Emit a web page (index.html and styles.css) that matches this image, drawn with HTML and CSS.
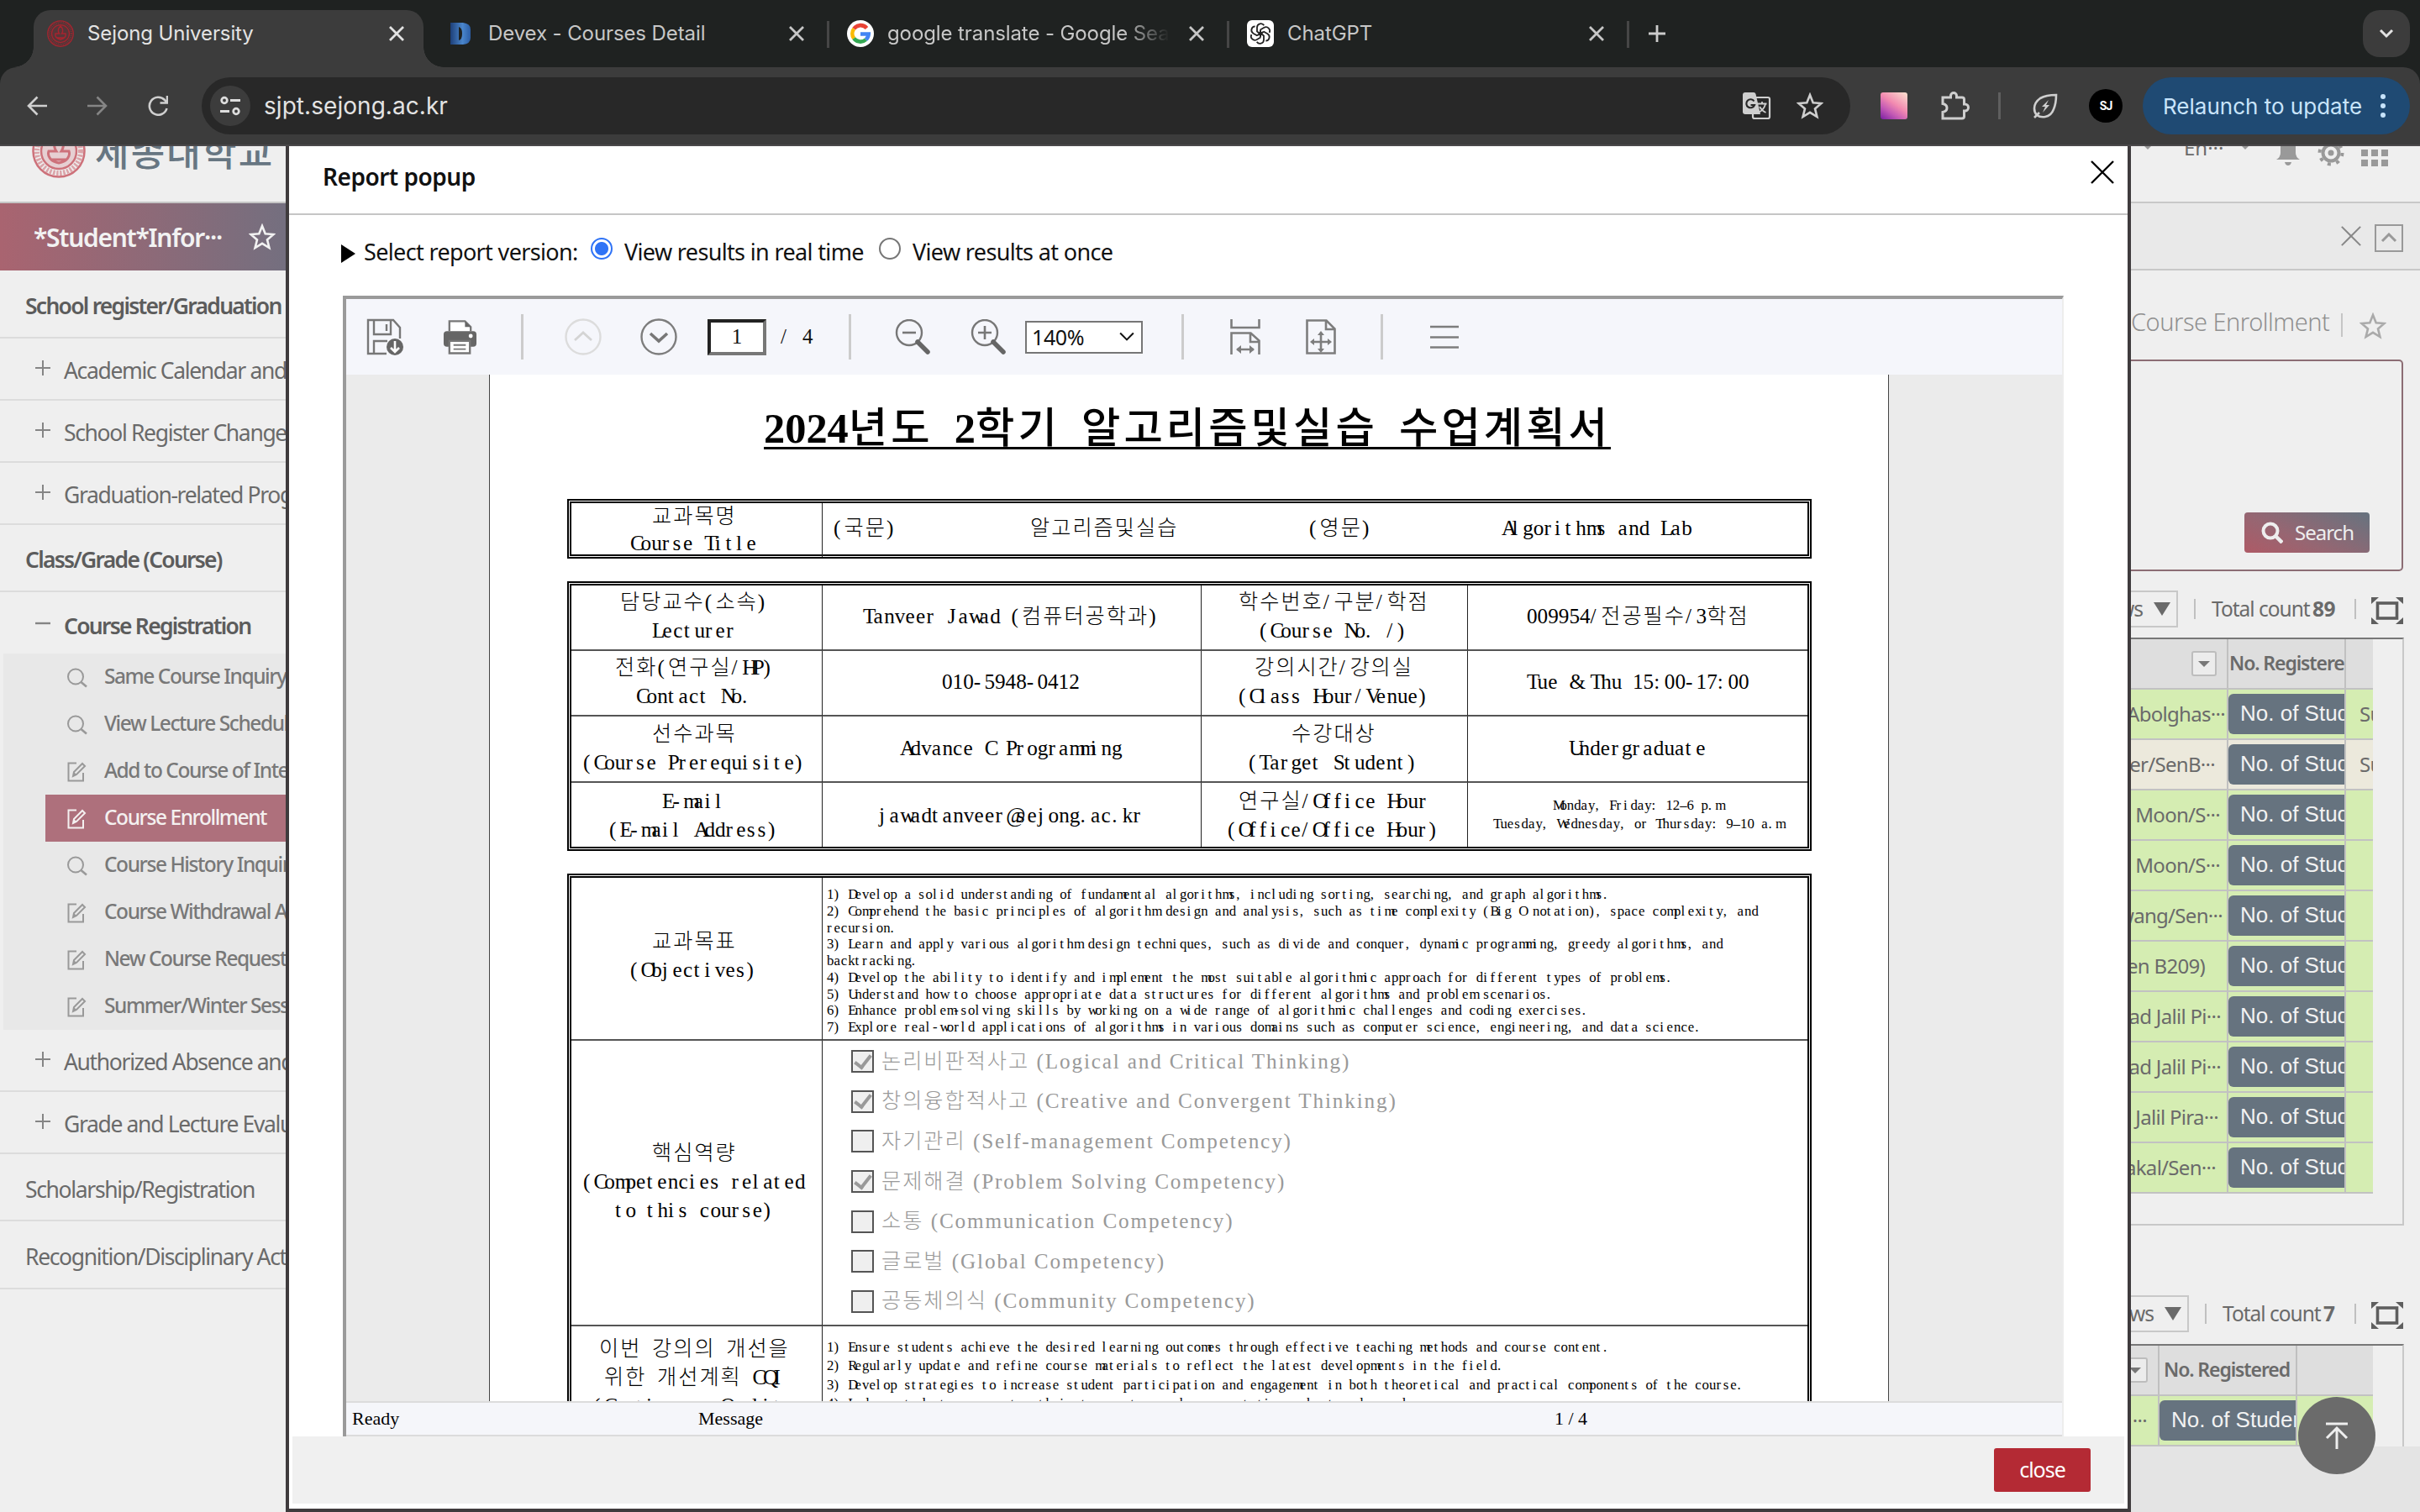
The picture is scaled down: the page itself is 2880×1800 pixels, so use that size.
FILE: index.html
```html
<!DOCTYPE html>
<html lang="ko">
<head>
<meta charset="utf-8">
<title>Sejong University</title>
<link rel="stylesheet" href="styles.css">
</head>
<body>
<svg class="defs" aria-hidden="true">
  <symbol id="x" viewBox="0 0 20 20"><path d="M2 2 18 18M18 2 2 18" fill="none" stroke="currentColor" stroke-width="2.8"/></symbol>
  <symbol id="thin-x" viewBox="0 0 28 28"><path d="M1 1 27 27M27 1 1 27" fill="none" stroke="currentColor" stroke-width="2.4"/></symbol>
  <symbol id="star" viewBox="0 0 32 32"><path d="M16 3l3.7 9.2 9.8.8-7.5 6.4 2.4 9.6-8.4-5.2-8.4 5.2L10 19.4 2.500 13l9.800-.8z" fill="none" stroke="currentColor" stroke-width="2.600"/></symbol>
  <symbol id="plus" viewBox="0 0 18 18"><path d="M9 0v18M0 9h18" stroke="currentColor" stroke-width="2"/></symbol>
  <symbol id="minus" viewBox="0 0 18 18"><path d="M0 9h18" stroke="currentColor" stroke-width="2.400"/></symbol>
  <symbol id="lens" viewBox="0 0 24 24"><circle cx="10" cy="10.500" r="9" fill="none" stroke="currentColor" stroke-width="2"/><path d="M16.500 17l6.500 5.500" stroke="currentColor" stroke-width="2.600"/></symbol>
  <symbol id="edit" viewBox="0 0 24 24"><path d="M11 1.500H1.500v21H19V13" fill="none" stroke="currentColor" stroke-width="2"/><path d="M7 17l1-5L18 2l3 3-10 10z" fill="none" stroke="currentColor" stroke-width="2"/><path d="M7 17l1-5 3.500 3.500z" fill="currentColor"/></symbol>
  <symbol id="expand" viewBox="0 0 38 36"><path d="M0 10V2h9zM38 10V2h-9zM0 26v8h9zM38 26v8h-9z" fill="currentColor"/><rect x="7.500" y="9" width="23" height="18" fill="none" stroke="currentColor" stroke-width="3.600"/></symbol>
  <symbol id="emblem" viewBox="0 0 64 64"><circle cx="32" cy="32" r="30.500" fill="none" stroke="currentColor" stroke-width="2.500"/><circle cx="32" cy="32" r="26" fill="none" stroke="currentColor" stroke-width="6" stroke-dasharray="2.500 1.600" opacity=".6"/><circle cx="32" cy="32" r="21" fill="currentColor" fill-opacity=".25" stroke="currentColor" stroke-width="2.500"/><path d="M32 14c6 6 7 12 3 18h9c2 6-2 12-12 14-10-2-14-8-12-14h9c-4-6-3-12 3-18zM24 42h16" fill="none" stroke="currentColor" stroke-width="3"/></symbol>
</svg>

<header class="chrome">
  <div class="tabs">
    <div class="tab active">
      <svg class="fav red"><use href="#emblem"/></svg><span class="ttl">Sejong University</span><svg class="tx"><use href="#x"/></svg>
    </div>
    <div class="tab devex">
      <svg class="fav" viewBox="0 0 32 32"><defs><linearGradient id="dg"><stop offset="0" stop-color="#1d3f78"/><stop offset=".6" stop-color="#4a86cc"/><stop offset="1" stop-color="#2b5da5"/></linearGradient></defs><path d="M4 3h15q9 1 9 8v10q0 7-9 8H4zM14 8v16q4-1 4-8t-4-8z" fill="url(#dg)" fill-rule="evenodd"/></svg><span class="ttl">Devex - Courses Detail</span><svg class="tx"><use href="#x"/></svg>
    </div>
    <div class="tab sep">
      <svg class="fav" viewBox="0 0 32 32"><circle cx="16" cy="16" r="16" fill="#fff"/><g fill="none" stroke-width="4.600"><path d="M23.500 9.500A9.700 9.700 0 0 0 8.200 10.300" stroke="#e94335"/><path d="M8.200 10.300a9.700 9.700 0 0 0 0 11.400" stroke="#fabb05"/><path d="M8.200 21.700a9.700 9.700 0 0 0 14.300 1.400" stroke="#34a853"/><path d="M22.500 23.100A9.700 9.700 0 0 0 25.700 16.500H16" stroke="#4285f4"/></g></svg><span class="ttl fade">google translate - Google Search</span><svg class="tx"><use href="#x"/></svg>
    </div>
    <div class="tab sep">
      <svg class="fav" viewBox="0 0 32 32"><rect width="32" height="32" rx="6" fill="#fff"/><g fill="none" stroke="#222" stroke-width="1.800"><g id="k"><path d="M12 14V8.500a4.500 4.500 0 0 1 8.300-2.300M12 13.700l7 4"/></g><use href="#k" transform="rotate(60 16 16)"/><use href="#k" transform="rotate(120 16 16)"/><use href="#k" transform="rotate(180 16 16)"/><use href="#k" transform="rotate(240 16 16)"/><use href="#k" transform="rotate(300 16 16)"/></g></svg><span class="ttl">ChatGPT</span><svg class="tx"><use href="#x"/></svg>
    </div>
    <div class="newtab"><svg viewBox="0 0 20 20"><path d="M10 0v20M0 10h20" stroke="#ccc" stroke-width="2.800"/></svg></div>
    <div class="tabsearch"><svg viewBox="0 0 18 12"><path d="M2 2l7 7 7-7" fill="none" stroke="#e3e3e3" stroke-width="3"/></svg></div>
  </div>
  <div class="toolbar">
    <svg class="nav" viewBox="0 0 24 24"><path d="M24 12H2M12.500 1.500 2 12l10.500 10.500" fill="none" stroke="#cfcfcf" stroke-width="2.600"/></svg>
    <svg class="nav" viewBox="0 0 24 24"><path d="M0 12h22M11.500 1.500 22 12 11.500 22.500" fill="none" stroke="#858585" stroke-width="2.600"/></svg>
    <svg class="nav" viewBox="0 0 24 24"><path d="M22.500 15A10.500 10.500 0 1 1 20 5l2 2.500M23 0v8.500h-8.500" fill="none" stroke="#cfcfcf" stroke-width="2.600"/></svg>
    <div class="omni">
      <span class="site"><svg viewBox="0 0 24 24"><g fill="none" stroke="#ddd" stroke-width="2.800"><circle cx="5" cy="5.500" r="3.300"/><path d="M12 5.500h12M0 18.500h11"/><circle cx="19" cy="18.500" r="3.300"/></g></svg></span>
      <span class="url">sjpt.sejong.ac.kr</span>
      <svg class="oi" viewBox="0 0 34 34"><rect x="12" y="7" width="20" height="25" rx="2" fill="none" stroke="#cfcfcf" stroke-width="2.200"/><path d="M3 1h10q2 0 2.500 2L21 27H3q-3 0-3-3V4q0-3 3-3z" fill="#cfcfcf"/><path d="M13.500 11.500A5 5 0 1 0 14 16h-4.500" fill="none" stroke="#282828" stroke-width="2.200"/><path d="M17.500 14.500h11M23 12v2.500M27 15q-2 7-8.500 10M20 18q3 5 7.500 7" fill="none" stroke="#cfcfcf" stroke-width="1.800"/></svg>
      <svg class="oi star"><use href="#star"/></svg>
    </div>
    <span class="ext"></span>
    <svg class="puzzle" viewBox="0 0 36 36"><path d="M4 8h9.500V6a3.500 3.500 0 0 1 7 0v2H27q2.500 0 2.500 2.500V16h1a4 4 0 0 1 0 8h-1v6.500Q29.500 33 27 33H4v-7.500q5-1 5-5t-5-5z" fill="none" stroke="#cfcfcf" stroke-width="3"/></svg>
    <span class="vbar"></span>
    <svg class="leaf" viewBox="0 0 32 32"><path d="M29 3q-12 0-19 4-7 5-7 12 0 5 3 8 4 3 10 2 7-1 10-9 3-7 3-17zM3 30l6-6" fill="none" stroke="#cfcfcf" stroke-width="2.600"/><path d="M20 9l-8 8h4l-3 7 8-9h-4z" fill="#cfcfcf"/></svg>
    <span class="avatar">SJ</span>
    <span class="relaunch">Relaunch to update<i></i></span>
  </div>
</header>

<main class="page">
  <nav class="side">
    <div class="logo"><svg><use href="#emblem"/></svg><b>세종대학교</b></div>
    <div class="who"><span>*Student*Infor···</span><svg><use href="#star"/></svg></div>
    <div class="sec b h81">School register/Graduation</div>
    <div class="it"><svg><use href="#plus"/></svg>Academic Calendar and</div>
    <div class="it"><svg><use href="#plus"/></svg>School Register Change</div>
    <div class="it"><svg><use href="#plus"/></svg>Graduation-related Program</div>
    <div class="sec b">Class/Grade (Course)</div>
    <div class="it b open"><svg><use href="#minus"/></svg>Course Registration</div>
    <div class="subs">
      <div class="sub"><svg><use href="#lens"/></svg>Same Course Inquiry</div>
      <div class="sub"><svg><use href="#lens"/></svg>View Lecture Schedule</div>
      <div class="sub"><svg><use href="#edit"/></svg>Add to Course of Interest</div>
      <div class="sub on"><svg><use href="#edit"/></svg>Course Enrollment</div>
      <div class="sub"><svg><use href="#lens"/></svg>Course History Inquiry</div>
      <div class="sub"><svg><use href="#edit"/></svg>Course Withdrawal App</div>
      <div class="sub"><svg><use href="#edit"/></svg>New Course Request</div>
      <div class="sub"><svg><use href="#edit"/></svg>Summer/Winter Session</div>
    </div>
    <div class="it"><svg><use href="#plus"/></svg>Authorized Absence and</div>
    <div class="it"><svg><use href="#plus"/></svg>Grade and Lecture Evaluation</div>
    <div class="sec low">Scholarship/Registration</div>
    <div class="sec h81 low">Recognition/Disciplinary Action</div>
  </nav>

  <section class="modal">
    <div class="mhead"><h1>Report popup</h1><svg><use href="#thin-x"/></svg></div>
    <div class="opts">
      <i class="tri"></i><span class="o1">Select report version:</span>
      <i class="radio on"></i><span class="o2">View results in real time</span>
      <i class="radio"></i><span>View results at once</span>
    </div>
    <div class="viewer">
      <div class="vbarx">
        <svg class="save" viewBox="0 0 44 44"><g fill="none" stroke="#777" stroke-width="2.400"><path d="M24 42H2V2h30l8 9v13M9 2v17h20V2M24 7v8M9 42V27h16"/></g><circle cx="34" cy="34" r="10" fill="#666"/><path d="M34 27v12M29 35l5 5 5-5" stroke="#fff" stroke-width="2.600" fill="none"/></svg>
        <svg class="print" viewBox="0 0 42 42"><path d="M8 14V2h19l7 7v5" fill="#fff" stroke="#777" stroke-width="2.400"/><path d="M27 2v7h7z" fill="#666"/><rect x="1" y="14" width="40" height="19" rx="4" fill="#666"/><circle cx="34" cy="20" r="2.500" fill="#fff"/><path d="M8 26h25v15H8z" fill="#fff" stroke="#777" stroke-width="2.400"/><path d="M13 31h15M13 36h15" stroke="#777" stroke-width="2"/></svg>
        <i class="bar"></i>
        <svg class="circ up" viewBox="0 0 44 44"><circle cx="22" cy="22" r="20.500" fill="none" stroke="#dcdcdc" stroke-width="2.400"/><path d="M12 26l10-9 10 9" fill="none" stroke="#d4d4d4" stroke-width="2.800"/></svg>
        <svg class="circ dn" viewBox="0 0 44 44"><circle cx="22" cy="22" r="20.500" fill="none" stroke="#7d7d7d" stroke-width="2.400"/><path d="M12 18l10 9 10-9" fill="none" stroke="#777" stroke-width="3.600"/></svg>
        <span class="pg">1</span><span class="of"><span>/</span><span>4</span></span>
        <i class="bar"></i>
        <svg class="zo" viewBox="0 0 42 42"><g fill="none" stroke="#777"><circle cx="17" cy="16" r="15" stroke-width="2.400"/><path d="M9 16h16" stroke-width="2.600"/></g><path d="M27 27l12 12" stroke="#666" stroke-width="5.500" stroke-linecap="round"/></svg>
        <svg class="zi" viewBox="0 0 42 42"><g fill="none" stroke="#777"><circle cx="17" cy="16" r="15" stroke-width="2.400"/><path d="M9 16h16M17 8v16" stroke-width="2.600"/></g><path d="M27 27l12 12" stroke="#666" stroke-width="5.500" stroke-linecap="round"/></svg>
        <span class="zsel">140%<svg viewBox="0 0 16 10"><path d="M1 1l7 7 7-7" fill="none" stroke="#111" stroke-width="1.800"/></svg></span>
        <i class="bar"></i>
        <svg class="fw" viewBox="0 0 36 42"><g fill="none" stroke="#7d7d7d" stroke-width="2.600"><path d="M1.500 0v10h33V0M1.500 42V16.500h23l10 9V42M24 16.500V27h10M8 36h20"/></g><path d="M7 36l6-5v10zM29 36l-6-5v10z" fill="#7d7d7d"/></svg>
        <svg class="fp" viewBox="0 0 36 42"><g fill="none" stroke="#7d7d7d" stroke-width="2.600"><path d="M1.500 1.500h23l10 10v29h-33zM24 1.500V12h10M18 18v18M9 27h18"/></g><path d="M18 14l-4 5h8zM18 40l-4-5h8zM5 27l5-4v8zM31 27l-5-4v8z" fill="#7d7d7d"/></svg>
        <i class="bar"></i>
        <svg class="mn" viewBox="0 0 34 28"><path d="M0 2h34M0 14.500h34M0 26.500h34" stroke="#7d7d7d" stroke-width="2.600"/></svg>
      </div>
      <div class="canvas">
        <article class="paper">
          <h2><p class="ln t50">2024년도 2학기 알고리즘및실습 수업계획서</p></h2>
          <div class="tbl t1">
            <div class="lab"><p class="ln">교과목명</p><p class="ln">Course Title</p></div>
            <div class="r1"><p class="ln">(국문)</p></div><div class="r2"><p class="ln">알고리즘및실습</p></div><div class="r3"><p class="ln">(영문)</p></div><div class="r4"><p class="ln">Algorithms and Lab</p></div>
          </div>
          <div class="tbl t2">
            <div class="lab"><p class="ln">담당교수(소속)</p><p class="ln">Lecturer</p></div><div><p class="ln">Tanveer Jawad (컴퓨터공학과)</p></div><div><p class="ln">학수번호/구분/학점</p><p class="ln">(Course No. /)</p></div><div><p class="ln">009954/전공필수/3학점</p></div>
            <div class="lab"><p class="ln">전화(연구실/HP)</p><p class="ln">Contact No.</p></div><div><p class="ln">010-5948-0412</p></div><div><p class="ln">강의시간/강의실</p><p class="ln">(Class Hour/Venue)</p></div><div><p class="ln">Tue &amp; Thu 15:00-17:00</p></div>
            <div class="lab"><p class="ln">선수과목</p><p class="ln">(Course Prerequisite)</p></div><div><p class="ln">Advance C Programming</p></div><div><p class="ln">수강대상</p><p class="ln">(Target Student)</p></div><div><p class="ln">Undergraduate</p></div>
            <div class="lab em"><p class="ln">E-mail</p><p class="ln">(E-mail Address)</p></div><div class="em"><p class="ln">jawadtanveer@sejong.ac.kr</p></div><div class="em"><p class="ln">연구실/Office Hour</p><p class="ln">(Office/Office Hour)</p></div><div class="sm"><p class="ln">Monday, Friday: 12–6 p.m</p><p class="ln">Tuesday, Wednesday, or Thursday: 9–10 a.m</p></div>
          </div>
          <div class="tbl t3">
            <div class="lab ob"><p class="ln">교과목표</p><p class="ln">(Objectives)</p></div>
            <div class="list obj">
              <p class="ln">1) Develop a solid understanding of fundamental algorithms, including sorting, searching, and graph algorithms.</p>
              <p class="ln">2) Comprehend the basic principles of algorithm design and analysis, such as time complexity (Big O notation), space complexity, and</p>
              <p class="ln">recursion.</p>
              <p class="ln">3) Learn and apply various algorithm design techniques, such as divide and conquer, dynamic programming, greedy algorithms, and</p>
              <p class="ln">backtracking.</p>
              <p class="ln">4) Develop the ability to identify and implement the most suitable algorithmic approach for different types of problems.</p>
              <p class="ln">5) Understand how to choose appropriate data structures for different algorithms and problem scenarios.</p>
              <p class="ln">6) Enhance problem-solving skills by working on a wide range of algorithmic challenges and coding exercises.</p>
              <p class="ln">7) Explore real-world applications of algorithms in various domains such as computer science, engineering, and data science.</p>
            </div>
            <div class="lab"><p class="ln">핵심역량</p><p class="ln">(Competencies related</p><p class="ln">to this course)</p></div>
            <div class="checks">
              <p><i class="cb c"></i>논리비판적사고 <span>(Logical and Critical Thinking)</span></p>
              <p><i class="cb c"></i>창의융합적사고 <span>(Creative and Convergent Thinking)</span></p>
              <p><i class="cb"></i>자기관리 <span>(Self-management Competency)</span></p>
              <p><i class="cb c"></i>문제해결 <span>(Problem Solving Competency)</span></p>
              <p><i class="cb"></i>소통 <span>(Communication Competency)</span></p>
              <p><i class="cb"></i>글로벌 <span>(Global Competency)</span></p>
              <p><i class="cb"></i>공동체의식 <span>(Community Competency)</span></p>
            </div>
            <div class="lab cqi"><p class="ln">이번 강의의 개선을</p><p class="ln">위한 개선계획 CQI</p><p class="ln">(Continuous Quality</p></div>
            <div class="list imp">
              <p class="ln">1) Ensure students achieve the desired learning outcomes through effective teaching methods and course content.</p>
              <p class="ln">2) Regularly update and refine course materials to reflect the latest developments in the field.</p>
              <p class="ln">3) Develop strategies to increase student participation and engagement in both theoretical and practical components of the course.</p>
              <p class="ln">4) Induce students can master their team-outcomes by presentations about modern advances.</p>
            </div>
          </div>
        </article>
      </div>
      <div class="status"><span class="s1">Ready</span><span class="s2">Message</span><span>1 / 4</span></div>
    </div>
    <footer class="mfoot"><span class="btn">close</span></footer>
  </section>

  <section class="right">
    <div class="rtop">
      <i class="dn1"></i><span>En···</span><i class="dn2"></i>
      <svg class="bell" viewBox="0 0 30 40"><path d="M15 0q9 2 9 14v10q0 5 5 8H1q5-3 5-8V14Q6 2 15 0zM11 35h8q-1 4-4 4t-4-4z" fill="#999"/></svg>
      <svg class="gear" viewBox="0 0 32 32"><circle cx="16" cy="16" r="9.500" fill="none" stroke="#999" stroke-width="4"/><circle cx="16" cy="16" r="3.500" fill="#999"/><circle cx="16" cy="16" r="13.500" fill="none" stroke="#999" stroke-width="4" stroke-dasharray="4 6.600"/></svg>
      <svg class="apps" viewBox="0 0 32 34"><path d="M0 1h8v8H0zM12 1h8v8h-8zM24 1h8v8h-8zM0 13h8v8H0zM12 13h8v8h-8zM24 13h8v8h-8zM0 25h8v8H0zM12 25h8v8h-8zM24 25h8v8h-8z" fill="#999"/></svg>
    </div>
    <div class="rtab"><svg class="rx"><use href="#thin-x"/></svg><span class="upb"><svg viewBox="0 0 20 12"><path d="M2 10l8-8 8 8" fill="none" stroke="#999" stroke-width="3"/></svg></span></div>
    <div class="rhead"><span>Course Enrollment</span><i></i><svg><use href="#star"/></svg></div>
    <div class="panel"><span class="search"><svg viewBox="0 0 26 26"><circle cx="11" cy="11" r="8.500" fill="none" stroke="#eee" stroke-width="4"/><path d="M17 17l8 8" stroke="#eee" stroke-width="4.500"/></svg>Search</span></div>
    <div class="count c1"><span class="sel">ws<i></i></span><i class="b"></i><span class="tc">Total count <b>89</b></span><i class="b2"></i><svg><use href="#expand"/></svg></div>
    <div class="grid g1">
      <div class="row hd"><span class="n"><em class="flt"></em></span><span class="s">No. Registered</span><span class="u"></span></div>
      <div class="row"><span class="n" style="padding-right:2px">Abolghas···</span><span class="s"><b>No. of Students</b></span><span class="u">Su</span></div>
      <div class="row alt"><span class="n" style="padding-right:14px">er/SenB···</span><span class="s"><b>No. of Students</b></span><span class="u">Su</span></div>
      <div class="row"><span class="n" style="padding-right:8px">Moon/S···</span><span class="s"><b>No. of Students</b></span><span class="u"></span></div>
      <div class="row"><span class="n" style="padding-right:8px">Moon/S···</span><span class="s"><b>No. of Students</b></span><span class="u"></span></div>
      <div class="row"><span class="n" style="padding-right:5px">wang/Sen···</span><span class="s"><b>No. of Students</b></span><span class="u"></span></div>
      <div class="row"><span class="n" style="padding-right:26px">en B209)</span><span class="s"><b>No. of Students</b></span><span class="u"></span></div>
      <div class="row"><span class="n" style="padding-right:7px">ad Jalil Pi···</span><span class="s"><b>No. of Students</b></span><span class="u"></span></div>
      <div class="row"><span class="n" style="padding-right:7px">ad Jalil Pi···</span><span class="s"><b>No. of Students</b></span><span class="u"></span></div>
      <div class="row"><span class="n" style="padding-right:10px">Jalil Pira···</span><span class="s"><b>No. of Students</b></span><span class="u"></span></div>
      <div class="row"><span class="n" style="padding-right:13px">akal/Sen···</span><span class="s"><b>No. of Students</b></span><span class="u"></span></div>
    </div>
    <div class="count c2"><span class="sel">ows<i></i></span><i class="b"></i><span class="tc">Total count <b>7</b></span><i class="b2"></i><svg><use href="#expand"/></svg></div>
    <div class="grid g2">
      <div class="row hd"><span class="n"><em class="flt"></em></span><span class="s">No. Registered</span><span class="u"></span></div>
      <div class="row"><span class="n" style="padding-right:13px">···</span><span class="s"><b>No. of Students</b></span><span class="u"></span></div>
    </div>
    <div class="rfoot"></div>
    <svg class="totop" viewBox="0 0 92 92"><circle cx="46" cy="46" r="46" fill="#6b6b6b"/><path d="M33 32h26M46 62V37M34 49l12-12 12 12" fill="none" stroke="#eee" stroke-width="3"/></svg>
  </section>
</main>
<script src="cells.js"></script>
</body>
</html>
```
FILE: styles.css
```css
* { box-sizing: border-box; }
body { margin: 0; width: 2880px; height: 1800px; overflow: hidden; background: #efefef; font-family: "Noto Sans", "Noto Sans CJK KR", sans-serif; }
p, h1, h2 { margin: 0; }
i, em { font-style: normal; }
svg { display: block; flex: none; }
.defs { position: absolute; width: 0; height: 0; }

/* browser chrome */
.chrome { height: 174px; background: #1f2221; font-family: Inter, sans-serif; border-bottom: 2px solid #4a484a; }
.tabs { height: 80px; display: flex; align-items: flex-start; padding-left: 40px; }
.tab { position: relative; display: flex; align-items: center; height: 56px; margin-top: 12px; width: 476px; padding-left: 22px; padding-right: 28px; color: #c7c7c7; }
.tab.active { width: 464px; height: 68px; padding: 0 22px 12px 16px; background: #3c3c3c; border-radius: 20px 20px 0 0; color: #e3e3e3; }
.tab.active::before, .tab.active::after { content: ""; position: absolute; bottom: 0; width: 24px; height: 24px; }
.tab.active::before { left: -24px; background: radial-gradient(circle at 0 0, #1f2221 23.5px, #3c3c3c 24px); }
.tab.active::after { right: -24px; background: radial-gradient(circle at 100% 0, #1f2221 23.5px, #3c3c3c 24px); }
.tab.devex { width: 482px; padding-left: 28px; }
.tab.sep::before, .newtab::before { content: ""; position: absolute; left: -2px; top: 13px; width: 3px; height: 32px; background: #464646; }
.fav { width: 32px; height: 32px; margin-right: 16px; }
.devex .fav { margin-right: 17px; }
.red { color: #a8242f; }
.ttl { flex: 1; font-size: 24px; letter-spacing: -.1px; white-space: nowrap; overflow: hidden; line-height: 34px; }
.fade { flex: 0 0 336px; margin-right: 22px; -webkit-mask-image: linear-gradient(90deg, #000 280px, transparent 336px); mask-image: linear-gradient(90deg, #000 280px, transparent 336px); }
.tx { width: 20px; height: 20px; }
.newtab { position: relative; width: 70px; height: 56px; margin-top: 12px; padding: 18px 0 0 24px; }
.newtab svg { width: 20px; height: 20px; }
.tabsearch { margin: 12px 12px 0 auto; width: 56px; height: 56px; border-radius: 20px; background: #3c3c3c; display: grid; place-items: center; }
.tabsearch svg { width: 18px; height: 12px; }
.toolbar { height: 92px; background: #3c3c3c; border-radius: 20px 20px 0 0; display: flex; align-items: center; padding: 0 12px 0 32px; }
.nav { width: 24px; height: 24px; margin-right: 48px; }
.nav + .nav + .nav { margin-right: 40px; }
.omni { width: 1962px; height: 68px; border-radius: 34px; background: #282828; display: flex; align-items: center; padding: 0 32px 0 10px; }
.site { width: 48px; height: 48px; border-radius: 50%; background: #3c3c3c; display: grid; place-items: center; margin-right: 16px; }
.site svg { width: 24px; height: 24px; }
.url { flex: 1; font-size: 28px; letter-spacing: .05px; color: #e3e3e3; }
.oi { width: 34px; height: 34px; margin-right: 30px; color: #cfcfcf; }
.oi.star { margin-right: 0; width: 32px; height: 32px; }
.ext { width: 32px; height: 32px; margin: 0 38px 0 36px; border-radius: 3px; background: linear-gradient(215deg, #fde3d0 0%, #f28ab0 45%, #c45ab5 70%, #7a1fa2 100%); }
.puzzle { width: 36px; height: 36px; margin-right: 34px; }
.vbar { width: 3px; height: 32px; background: #5f5f5f; margin-right: 37px; }
.leaf { width: 32px; height: 32px; margin-right: 36px; }
.avatar { width: 40px; height: 40px; border-radius: 50%; background: #000; color: #fff; font: 700 14px Roboto, sans-serif; letter-spacing: -1px; display: grid; place-items: center; margin-right: 24px; }
.relaunch { flex: 1; height: 68px; border-radius: 34px; background: #1f4a73; color: #c8e4fb; font-size: 26px; display: flex; align-items: center; justify-content: space-between; padding: 0 29px 0 24px; white-space: nowrap; }
.relaunch i { width: 6px; height: 6px; border-radius: 50%; background: currentColor; box-shadow: 0 -11px currentColor, 0 11px currentColor; }

/* page */
.page { display: flex; height: 1626px; overflow: hidden; }
.side { width: 340px; overflow: hidden; white-space: nowrap; color: #6a6a6a; font-size: 26.5px; letter-spacing: -1.35px; }
.logo { height: 68px; border-bottom: 2px solid #c5c5c5; display: flex; align-items: flex-start; padding-left: 38px; overflow: hidden; color: #cd717a; }
.logo svg { width: 64px; height: 64px; margin-top: -26px; }
.logo b { font: 500 44px/60px "Noto Sans CJK KR", sans-serif; color: #677682; margin: -25px 0 0 11px; letter-spacing: 2.2px; }
.who { height: 80px; display: flex; align-items: center; padding-left: 40px; background: linear-gradient(90deg, #a96470, #746f7f); color: #f2f2f2; font-size: 30px; font-weight: 600; letter-spacing: -1.3px; }
.who span { width: 256px; }
.who svg { width: 32px; height: 32px; }
.sec { height: 80px; border-bottom: 2px solid #dcdcdc; padding-left: 30px; line-height: 83px; }
.h81 { height: 81px; line-height: 84px; }
.low { line-height: 85px; }
.b { font-weight: 600; color: #5c5c5c; letter-spacing: -1.75px; }
.it { height: 74px; border-bottom: 2px solid #dcdcdc; padding: 3px 0 0 42px; display: flex; align-items: center; }
.it svg { width: 18px; height: 18px; margin: 0 16px 6px 0; color: #858585; }
.open { height: 73px; border-bottom: 0; padding-top: 6px; }
.subs { margin-left: 4px; background: #e8e8e8; font-size: 24.5px; font-weight: 500; color: #787878; letter-spacing: -1.45px; }
.sub { height: 56px; display: flex; align-items: center; padding: 0 0 3px 26px; margin-left: 50px; }
.sub svg { width: 24px; height: 24px; margin-right: 20px; margin-top: 5px; color: #999; }
.sub.on { background: #ae707c; color: #f4f0f0; }
.sub.on svg { color: #f4f0f0; }

/* modal */
.modal { width: 2196px; border: 4px solid #3f3b3d; border-top: 0; background: #fff; display: flex; flex-direction: column; }
.mhead { height: 82px; border-bottom: 2px solid #c5c5c5; display: flex; justify-content: space-between; padding: 0 16px 0 40px; }
.mhead h1 { font-size: 28px; font-weight: 600; line-height: 73px; color: #111; letter-spacing: -.5px; }
.mhead svg { width: 28px; height: 28px; margin-top: 17px; }
.opts { height: 96px; display: flex; align-items: center; padding: 0 0 10px 62px; font-size: 27px; color: #111; white-space: nowrap; letter-spacing: -.65px; }
.opts span { position: relative; top: 0; }
.tri { border-left: 17px solid #000; border-top: 11px solid transparent; border-bottom: 11px solid transparent; margin-right: 10px; position: relative; top: 3px; }
.radio { width: 26px; height: 26px; border: 2px solid #767676; border-radius: 50%; margin-right: 14px; position: relative; top: -3px; }
.radio.on { border-color: #2f73f6; background: radial-gradient(circle, #2f73f6 7.5px, #fff 8.5px); }
.o1 { width: 270px; } .o2 { width: 303px; }
.viewer { width: 2048px; height: 1358px; margin-left: 64px; border: 4px solid #9a9a9a; border-right: 2px solid #ededed; border-bottom: 0; display: flex; flex-direction: column; }
.vbarx { height: 90px; background: #f5f6fb; display: flex; align-items: center; padding-left: 24px; color: #111; }
.bar { width: 3px; height: 54px; background: #ccc; }
.save { width: 44px; height: 44px; margin-right: 47px; }
.print { width: 41px; height: 42px; margin-right: 52px; }
.circ { width: 44px; height: 44px; }
.up { margin: 0 46px 0 49px; } .dn { margin-right: 36px; }
.pg { width: 70px; height: 43px; background: #fff; border: 4px solid; border-color: #222 #777 #777 #222; font: 25px/34px "Liberation Serif", serif; text-align: center; }
.of { font: 25px/34px "Liberation Serif", serif; width: 98px; padding-left: 17px; display: flex; gap: 19px; }
.zo { width: 42px; height: 42px; margin: 0 48px 0 52px; } .zi { width: 42px; height: 42px; margin-right: 23px; }
.zsel { width: 140px; height: 39px; background: #fff; border: 2px solid #767676; font: 25px/36px "Noto Sans", sans-serif; display: flex; align-items: center; justify-content: space-between; padding: 0 8px 0 6px; margin-right: 46px; letter-spacing: -.4px; }
.zsel svg { width: 18px; height: 12px; }
.fw { width: 36px; height: 42px; margin: 0 54px 0 55px; } .fp { width: 36px; height: 42px; margin-right: 53px; }
.mn { width: 34px; height: 28px; margin-left: 56px; }
.canvas { height: 1222px; background: #ebebeb; overflow: hidden; display: flex; padding-left: 170px; }
.paper { width: 1666px; height: 1300px; background: #fff; border: 1px solid #444; border-width: 0 1px; color: #000; padding-left: 92px; }
.status { flex: 1; border: 2px solid #dcdcdc; border-width: 2px 0; background: #f5f6fa; font: 22px/38px "Liberation Serif", serif; display: flex; padding-left: 7px; }
.s1 { width: 412px; } .s2 { width: 1019px; }
.mfoot { height: 80px; margin: 0 4px; background: #f0f0f0; display: flex; justify-content: flex-end; padding: 14px 40px 0; }
.btn { width: 115px; height: 52px; border-radius: 3px; background: #b42a34; color: #fff; font-size: 25px; line-height: 50px; text-align: center; letter-spacing: -1px; }

/* report: text set in half-em / full-em cells */
.ln { font-family: "Liberation Serif", "Noto Sans CJK KR", serif; font-size: 25.2px; line-height: 34px; white-space: pre; font-variant-ligatures: none; font-weight: 300; }
.t50 { font-size: 50.4px; line-height: 86px; font-weight: 700; }
.t50 tspan { font-weight: 500; }
.paper h2 { width: 1008px; margin: 0 0 59px 234px; border-bottom: 3px solid #000; }
.tbl { width: 1481px; border: 5px double #000; display: grid; margin-bottom: 27px; }
.tbl > div { display: flex; flex-direction: column; align-items: center; justify-content: center; }
.tbl > .lab { padding-right: 6px; border-right: 1px solid #222; }
.t1 { height: 71px; grid-template-columns: 299px 101px 469px 94px 1fr; }
.tbl > .r1, .tbl > .r2, .tbl > .r3, .tbl > .r4 { padding-bottom: 3px; }
.tbl > .r4 { padding-left: 6px; }
.t1 .lab .ln { height: 32px; }
.t2 { height: 321px; grid-template-columns: 299px 451px 317px 1fr; grid-template-rows: 78px 78px 79px 76px; }
.t2 > div { border-right: 1px solid #222; border-bottom: 2px solid #555; }
.t2 > div:nth-child(4n) { border-right: 0; }
.t2 > div:nth-child(4n+2), .t2 > div:nth-child(4n+3) { padding-right: 2px; }
.t2 > div:nth-child(n+13) { border-bottom: 0; }
.t2 > .em { padding-top: 3px; }
.sm .ln { font-size: 16.8px; line-height: 22px; }
.t3 { height: 800px; grid-template-columns: 299px 1fr; grid-template-rows: 194px 340px 1fr; margin: 0; }
.t3 > div { border-bottom: 2px solid #555; }
.t3 > .ob { padding-bottom: 4px; }
.tbl > .list { align-items: flex-start; padding-left: 5px; }
.tbl > .obj { padding-top: 6px; }
.obj .ln { font-size: 16.8px; line-height: 19.7px; }
.tbl > .imp { justify-content: flex-start; padding-top: 14px; }
.imp .ln { font-size: 16.8px; line-height: 22.3px; }
.tbl > .cqi { justify-content: flex-start; padding-top: 11px; }
.tbl > .checks { align-items: flex-start; justify-content: flex-start; padding: 1px 0 0 34px; }
.checks p { height: 47.6px; display: flex; align-items: center; font: 300 25.2px/40px "Liberation Serif", "Noto Sans CJK KR", serif; color: #999; white-space: pre; letter-spacing: 2px; }
.checks span { letter-spacing: 1.85px; }
.cb { width: 27px; height: 27px; border: 2px solid #555; background: #efefef; margin-right: 9px; display: grid; place-items: center; }
.cb.c::after { content: ""; width: 8px; height: 16px; border: solid #999; border-width: 0 4px 4px 0; transform: translateY(-2px) rotate(38deg); }

/* right side of the page */
.right { position: relative; width: 344px; overflow: hidden; color: #6a6a6a; white-space: nowrap; display: flex; flex-direction: column; }
.rtop { height: 68px; border-bottom: 2px solid #c8c8c8; display: flex; align-items: flex-start; padding-left: 13px; font-size: 24px; overflow: hidden; flex: none; }
.rtop span { width: 66px; margin: -15px 0 0 36px; line-height: 34px; }
.dn1, .dn2 { border: 7px solid transparent; border-top-color: #999; border-bottom: 0; margin-top: -3px; }
.dn2 { margin-right: 29px; }
.bell { width: 30px; height: 40px; margin-top: -16px; margin-right: 20px; }
.gear { width: 32px; height: 32px; margin-top: -8px; margin-right: 20px; }
.apps { width: 32px; height: 34px; margin-top: -9px; }
.rtab { height: 80px; border-bottom: 2px solid #c8c8c8; background: #e9e9e9; display: flex; align-items: center; justify-content: flex-end; padding-right: 20px; color: #888; flex: none; }
.rx { width: 24px; height: 24px; margin-right: 16px; }
.upb { width: 34px; height: 33px; border: 2px solid #999; display: grid; place-items: center; margin-top: 4px; }
.upb svg { width: 20px; height: 12px; }
.rhead { height: 106px; display: flex; align-items: flex-start; color: #909090; font-size: 29px; font-weight: 300; letter-spacing: -.5px; flex: none; }
.rhead span { width: 250px; line-height: 40px; margin-top: 41px; }
.rhead i { width: 2px; height: 28px; background: #c5c5c5; margin: 51px 20px 0 0; }
.rhead svg { width: 32px; height: 32px; margin-top: 50px; color: #aaa; }
.panel { height: 252px; width: 324px; border: 2px solid #8c6d74; border-left: 0; border-radius: 0 5px 5px 0; flex: none; display: flex; justify-content: flex-end; padding: 180px 38px 0 0; }
.search { width: 149px; height: 48px; border-radius: 4px; background: linear-gradient(25deg, #ae5a66, #966672 40%, #66737f); color: #eee; font-size: 24px; letter-spacing: -1px; line-height: 46px; display: flex; align-items: center; padding-left: 20px; }
.search svg { width: 26px; height: 26px; margin-right: 14px; }
.count { height: 79px; display: flex; align-items: center; padding-top: 10px; font-size: 24.5px; letter-spacing: -1px; flex: none; }
.sel { width: 56px; height: 44px; border: 2px solid #c8c8c8; border-left: 0; line-height: 38px; display: flex; align-items: center; justify-content: flex-end; padding-right: 7px; overflow: hidden; }
.sel i { border: 10px solid transparent; border-top: 16px solid #6a6a6a; border-bottom: 0; margin-left: 13px; }
.count .b, .b2 { width: 2px; height: 24px; background: #c0c0c0; }
.count .b { margin: 0 19px; } .tc b { margin-left: -2px; letter-spacing: -.5px; }
.b2 { margin-left: auto; }
.c1 svg, .c2 svg { width: 38px; height: 36px; margin: 4px 20px 0 18px; color: #5e5e5e; }
.c2 { height: 141px; padding-top: 68px; }
.c2 .sel { width: 69px; }
.grid { width: 325px; border-top: 2px solid #777; border-right: 2px solid #c8c8c8; flex: none; }
.g1 { height: 700px; border-bottom: 2px solid #c8c8c8; }
.row { height: 60px; width: 288px; display: grid; grid-template-columns: 114px 142px 1fr; background: #d5edb2; border-bottom: 2px solid #c2c2c2; font-size: 24px; letter-spacing: -.7px; }
.g2 .row { grid-template-columns: 32px 166px 1fr; }
.row.alt { background: #ece9dc; }
.row > span { overflow: hidden; line-height: 57px; }
.row > .n { display: flex; justify-content: flex-end; }
.s { border: solid #c0c0c0; border-width: 0 2px; }
.s b { display: block; width: 200px; height: 48px; margin-top: 5px; border-radius: 6px; background: #66737f; color: #f2f2f2; font: 500 26px/47px "Liberation Sans", sans-serif; letter-spacing: 0; padding-left: 14px; }
.u { padding-left: 16px; }
.row.hd { background: #dedede; }
.hd .s { font-weight: 600; padding-left: 1px; font-size: 23px; letter-spacing: -1.1px; }
.g2 .hd .s { padding-left: 5px; }
.flt { width: 30px; height: 30px; border: 2px solid #bdbdbd; border-radius: 3px; background: #ececec; margin: 14px 12px 0 0; display: grid; place-items: center; flex: none; }
.flt::after { content: ""; border: 7px solid transparent; border-top: 7px solid #777; border-bottom: 0; }
.rfoot { flex: 1; background: #e4e4e4; }
.totop { position: absolute; left: 199px; top: 1489px; width: 92px; height: 92px; }
```
FILE: cells.js
```js
// Sets report lines on a fixed pitch: half an em for Latin, one em for Hangul.
document.querySelectorAll('.ln').forEach(function (p) {
  var cs = getComputedStyle(p), fs = parseFloat(cs.fontSize), lh = parseFloat(cs.lineHeight);
  var ns = 'http://www.w3.org/2000/svg';
  var svg = document.createElementNS(ns, 'svg'), t = document.createElementNS(ns, 'text');
  var s = p.textContent, x = 0, xs = [];
  Array.from(s).forEach(function (c) {
    xs.push(x.toFixed(1));
    x += /[\u3131-\ud7a3]/.test(c) ? fs : fs / 2;
  });
  svg.setAttribute('width', x);
  svg.setAttribute('height', lh);
  svg.style.overflow = 'visible';
  t.setAttribute('x', xs.join(' '));
  t.setAttribute('y', (fs > 40 ? 81 : lh / 2 + fs * 0.28).toFixed(1));
  t.style.whiteSpace = 'pre';
  if (p.classList.contains('t50')) {
    // Hangul runs in the title are a step lighter than the digits.
    s.split(/([\u3131-\ud7a3]+)/).forEach(function (run) {
      if (!run) return;
      if (/[\u3131-\ud7a3]/.test(run)) {
        var sp = document.createElementNS(ns, 'tspan');
        sp.textContent = run;
        t.appendChild(sp);
      } else {
        t.appendChild(document.createTextNode(run));
      }
    });
  } else {
    t.textContent = s;
  }
  svg.appendChild(t);
  p.textContent = '';
  p.appendChild(svg);
});
```
